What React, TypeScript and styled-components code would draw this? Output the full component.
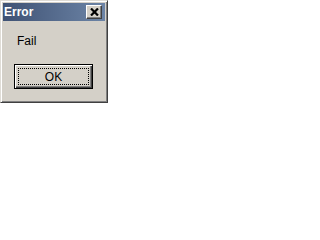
import React from "react";
import styled, { createGlobalStyle } from "styled-components";

const GlobalStyle = createGlobalStyle`
  html, body {
    margin: 0;
    padding: 0;
    background: #ffffff;
  }
  body {
    font-family: "Liberation Sans", Arial, sans-serif;
  }
`;

const Window = styled.div`
  box-sizing: border-box;
  width: 108px;
  height: 103px;
  display: flex;
  flex-direction: column;
  background: #d4d0c8;
  border-top: 1px solid #dfdcd6;
  border-left: 1px solid #dfdcd6;
  border-right: 1px solid #404040;
  border-bottom: 1px solid #404040;
  box-shadow: inset 1px 1px 0 #ffffff, inset -1px -1px 0 #808080;
  padding: 2px;
`;

const TitleBar = styled.div`
  height: 18px;
  display: flex;
  align-items: center;
  justify-content: space-between;
  padding: 0 3px 0 1px;
  background: linear-gradient(to right, #3f5274, #6c84a6);
`;

const Title = styled.span`
  color: #ffffff;
  font-family: "Liberation Sans", Arial, sans-serif;
  font-weight: bold;
  font-size: 12px;
  line-height: 14px;
`;

const CloseButton = styled.button`
  box-sizing: border-box;
  width: 16px;
  height: 14px;
  padding: 0;
  display: flex;
  align-items: center;
  justify-content: center;
  background: #d4d0c8;
  border-top: 1px solid #ffffff;
  border-left: 1px solid #ffffff;
  border-right: 1px solid #404040;
  border-bottom: 1px solid #404040;
  box-shadow: inset -1px -1px 0 #808080;
`;

const Body = styled.div`
  flex: 1;
  display: flex;
  flex-direction: column;
  padding: 13px 0 0 11px;
`;

const Message = styled.div`
  margin-left: 3px;
  font-size: 12px;
  color: #000000;
  height: 14px;
  line-height: 14px;
`;

const OkButton = styled.button`
  box-sizing: border-box;
  margin-top: 16px;
  width: 79px;
  height: 25px;
  padding: 3px;
  background: #d4d0c8;
  border: 1px solid #000000;
  box-shadow: inset 1px 1px 0 #ffffff, inset -1px -1px 0 #404040,
    inset -2px -2px 0 #808080;
  font-family: "Liberation Sans", Arial, sans-serif;
  font-size: 12px;
  color: #000000;
`;

const Focus = styled.span`
  box-sizing: border-box;
  display: flex;
  align-items: center;
  justify-content: center;
  width: 100%;
  height: 100%;
  border: 1px dotted #000000;
`;

export default function App() {
  return (
    <>
      <GlobalStyle />
      <Window>
        <TitleBar>
          <Title>Error</Title>
          <CloseButton>
            <svg width="9" height="8" viewBox="0 0 9 8">
              <path d="M1 0.5 L8 7.5 M8 0.5 L1 7.5" stroke="#000" strokeWidth="2.2" />
            </svg>
          </CloseButton>
        </TitleBar>
        <Body>
          <Message>Fail</Message>
          <OkButton>
            <Focus>OK</Focus>
          </OkButton>
        </Body>
      </Window>
    </>
  );
}
